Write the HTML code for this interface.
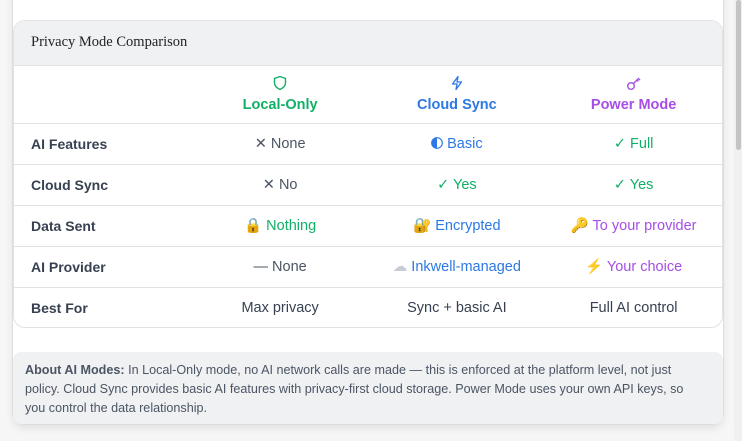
<!DOCTYPE html>
<html><head><style>
*{margin:0;padding:0;box-sizing:border-box}
body{width:742px;height:441px;background:#f6f6f7;font-family:"Liberation Sans",sans-serif;position:relative;overflow:hidden}
.outer{position:absolute;left:12px;top:-10px;width:712px;height:435px;background:#fff;border:1px solid #dcdde1;border-top:none;border-radius:0 0 12px 12px;box-shadow:0 4px 8px rgba(0,0,0,.08)}
.sb{position:absolute;left:734px;top:0;width:8px;height:441px;background:#f0f0f0}
.thumb{position:absolute;left:736px;top:0;width:5px;height:150px;background:#c4c4c4;border-radius:3px}
.card{position:absolute;left:13px;top:20px;width:710px;height:308px;border:1px solid #e1e2e6;border-radius:12px;overflow:hidden;background:#fff}
.hd{height:45px;background:#f0f1f3;border-bottom:1px solid #e1e2e6;font-family:"Liberation Serif",serif;font-size:14.5px;color:#222;padding:13px 0 0 17px}
table{border-collapse:collapse;width:100%;font-size:14.5px}
td{height:41px;border-bottom:1px solid #e1e2e6;text-align:center;color:#4b5563}
tr:last-child td{border-bottom:none}
td.l{text-align:left;padding-left:17px;color:#374151;font-weight:bold;font-size:14px;width:178px}
td.c{width:177px}
.h td{height:57px;font-weight:bold;vertical-align:top;padding-top:8px}
.g{color:#10b067}.b{color:#2c78e4}.p{color:#a64ee6}
.ic{display:block;height:18px;margin-bottom:5px}
.note{position:absolute;left:13px;top:352px;width:710px;height:72px;background:#f0f1f3;border-radius:8px;font-size:12.6px;color:#4b5563;line-height:19px;padding:9px 12px;white-space:nowrap}
</style></head><body>
<div class="outer"></div>
<div class="sb"></div><div class="thumb"></div>
<div class="card">
<div class="hd">Privacy Mode Comparison</div>
<table>
<tr class="h"><td class="l"></td>
<td class="c g"><svg class="ic" style="margin:0 auto 5px" width="14" height="16" viewBox="0 0 14 16"><path d="M7 1.5 L12.5 3.5 V8 C12.5 11 10 13 7 14.5 C4 13 1.5 11 1.5 8 V3.5 Z" fill="none" stroke="#10b067" stroke-width="1.4"/></svg>Local-Only</td>
<td class="c b"><svg class="ic" style="margin:0 auto 5px" width="14" height="16" viewBox="0 0 14 16"><path d="M8 1.5 L2.5 9 H7 L6 14.5 L11.5 7 H7 Z" fill="none" stroke="#2c78e4" stroke-width="1.3" stroke-linejoin="round"/></svg>Cloud Sync</td>
<td class="c p"><svg class="ic" style="margin:0 auto 5px" width="16" height="16" viewBox="0 0 16 16"><circle cx="5" cy="11" r="3.3" fill="none" stroke="#a64ee6" stroke-width="1.4"/><path d="M7.5 8.5 L13 3 M11 5 L12.5 6.5 M12.5 3.5 L14 5" fill="none" stroke="#a64ee6" stroke-width="1.4"/></svg>Power Mode</td></tr>
<tr><td class="l">AI Features</td><td>✕ None</td><td class="b"><svg width="12" height="12" viewBox="0 0 12 12" style="vertical-align:-1px"><circle cx="6" cy="6" r="5.3" fill="none" stroke="#2c78e4" stroke-width="1.2"/><path d="M6 0.7 A5.3 5.3 0 0 0 6 11.3 Z" fill="#2c78e4"/></svg> Basic</td><td class="g">✓ Full</td></tr>
<tr><td class="l">Cloud Sync</td><td>✕ No</td><td class="g">✓ Yes</td><td class="g">✓ Yes</td></tr>
<tr><td class="l">Data Sent</td><td class="g">🔒 Nothing</td><td class="b">🔐 Encrypted</td><td class="p">🔑 To your provider</td></tr>
<tr><td class="l">AI Provider</td><td>— None</td><td class="b"><span style="color:#c8ccd4">☁</span> Inkwell-managed</td><td class="p"><span style="color:#f4a623">⚡</span> Your choice</td></tr>
<tr><td class="l">Best For</td><td style="color:#374151">Max privacy</td><td style="color:#374151">Sync + basic AI</td><td style="color:#374151">Full AI control</td></tr>
</table>
</div>
<div class="note"><b>About AI Modes:</b> In Local-Only mode, no AI network calls are made — this is enforced at the platform level, not just<br>policy. Cloud Sync provides basic AI features with privacy-first cloud storage. Power Mode uses your own API keys, so<br>you control the data relationship.</div>
</body></html>
